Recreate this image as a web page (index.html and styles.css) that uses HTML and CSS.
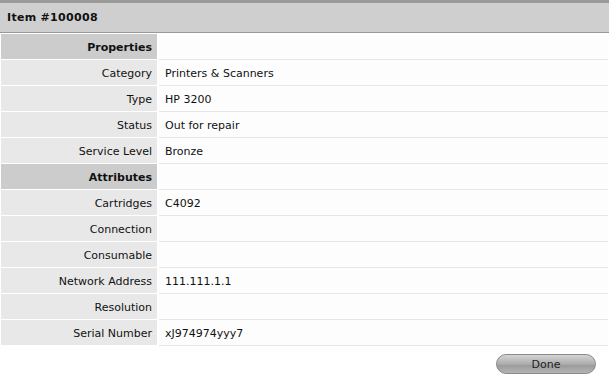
FILE: index.html
```html
<!DOCTYPE html>
<html>
<head>
<meta charset="utf-8">
<link rel="stylesheet" href="styles.css">
</head>
<body>
<div class="panel">
  <div class="header">Item #100008</div>
  <div class="grid">
    <div class="label section">Properties</div><div class="value"></div>
    <div class="label">Category</div><div class="value">Printers &amp; Scanners</div>
    <div class="label">Type</div><div class="value">HP 3200</div>
    <div class="label">Status</div><div class="value">Out for repair</div>
    <div class="label">Service Level</div><div class="value">Bronze</div>
    <div class="label section">Attributes</div><div class="value"></div>
    <div class="label">Cartridges</div><div class="value">C4092</div>
    <div class="label">Connection</div><div class="value"></div>
    <div class="label">Consumable</div><div class="value"></div>
    <div class="label">Network Address</div><div class="value">111.111.1.1</div>
    <div class="label">Resolution</div><div class="value"></div>
    <div class="label">Serial Number</div><div class="value">xJ974974yyy7</div>
  </div>
  <div class="actions"><button class="btn">Done</button></div>
</div>
</body>
</html>
```

FILE: styles.css
```css
html, body {
  margin: 0;
  padding: 0;
  background: #fff;
}
.panel {
  width: 610px;
  height: 381px;
  font-family: "DejaVu Sans", "Lucida Grande", sans-serif;
  font-size: 11px;
  color: #111;
}
.header {
  border-top: 3px solid #9a9a9a;
  border-bottom: 1px solid #999;
  background: #cfcfcf;
  height: 29px;
  line-height: 29px;
  padding-left: 7px;
  font-size: 11px;
  font-weight: bold;
  letter-spacing: 0.3px;
  margin-right: 1px;
}
.grid {
  display: grid;
  grid-template-columns: 156px 1fr;
  column-gap: 2px;
  margin: 1px 2px 0 1px;
}
.label {
  height: 25px;
  line-height: 27px;
  margin-bottom: 1px;
  background: #e8e8e8;
  text-align: right;
  padding-right: 5px;
}
.label.section {
  background: #cccccc;
  font-weight: bold;
}
.value {
  height: 25px;
  line-height: 27px;
  border-bottom: 1px solid #e6e6e6;
  padding-left: 6px;
  background: #fdfdfd;
}
.actions {
  display: flex;
  justify-content: flex-end;
  padding: 8px 14px 0 0;
}
.btn {
  width: 100px;
  height: 20px;
  border: 1px solid #8a8a8a;
  border-radius: 10px;
  background: linear-gradient(#d4d4d4, #a9a9a9 55%, #9a9a9a 56%, #b4b4b4);
  font-family: "DejaVu Sans", sans-serif;
  font-size: 11px;
  color: #222;
  padding: 0;
}
```
